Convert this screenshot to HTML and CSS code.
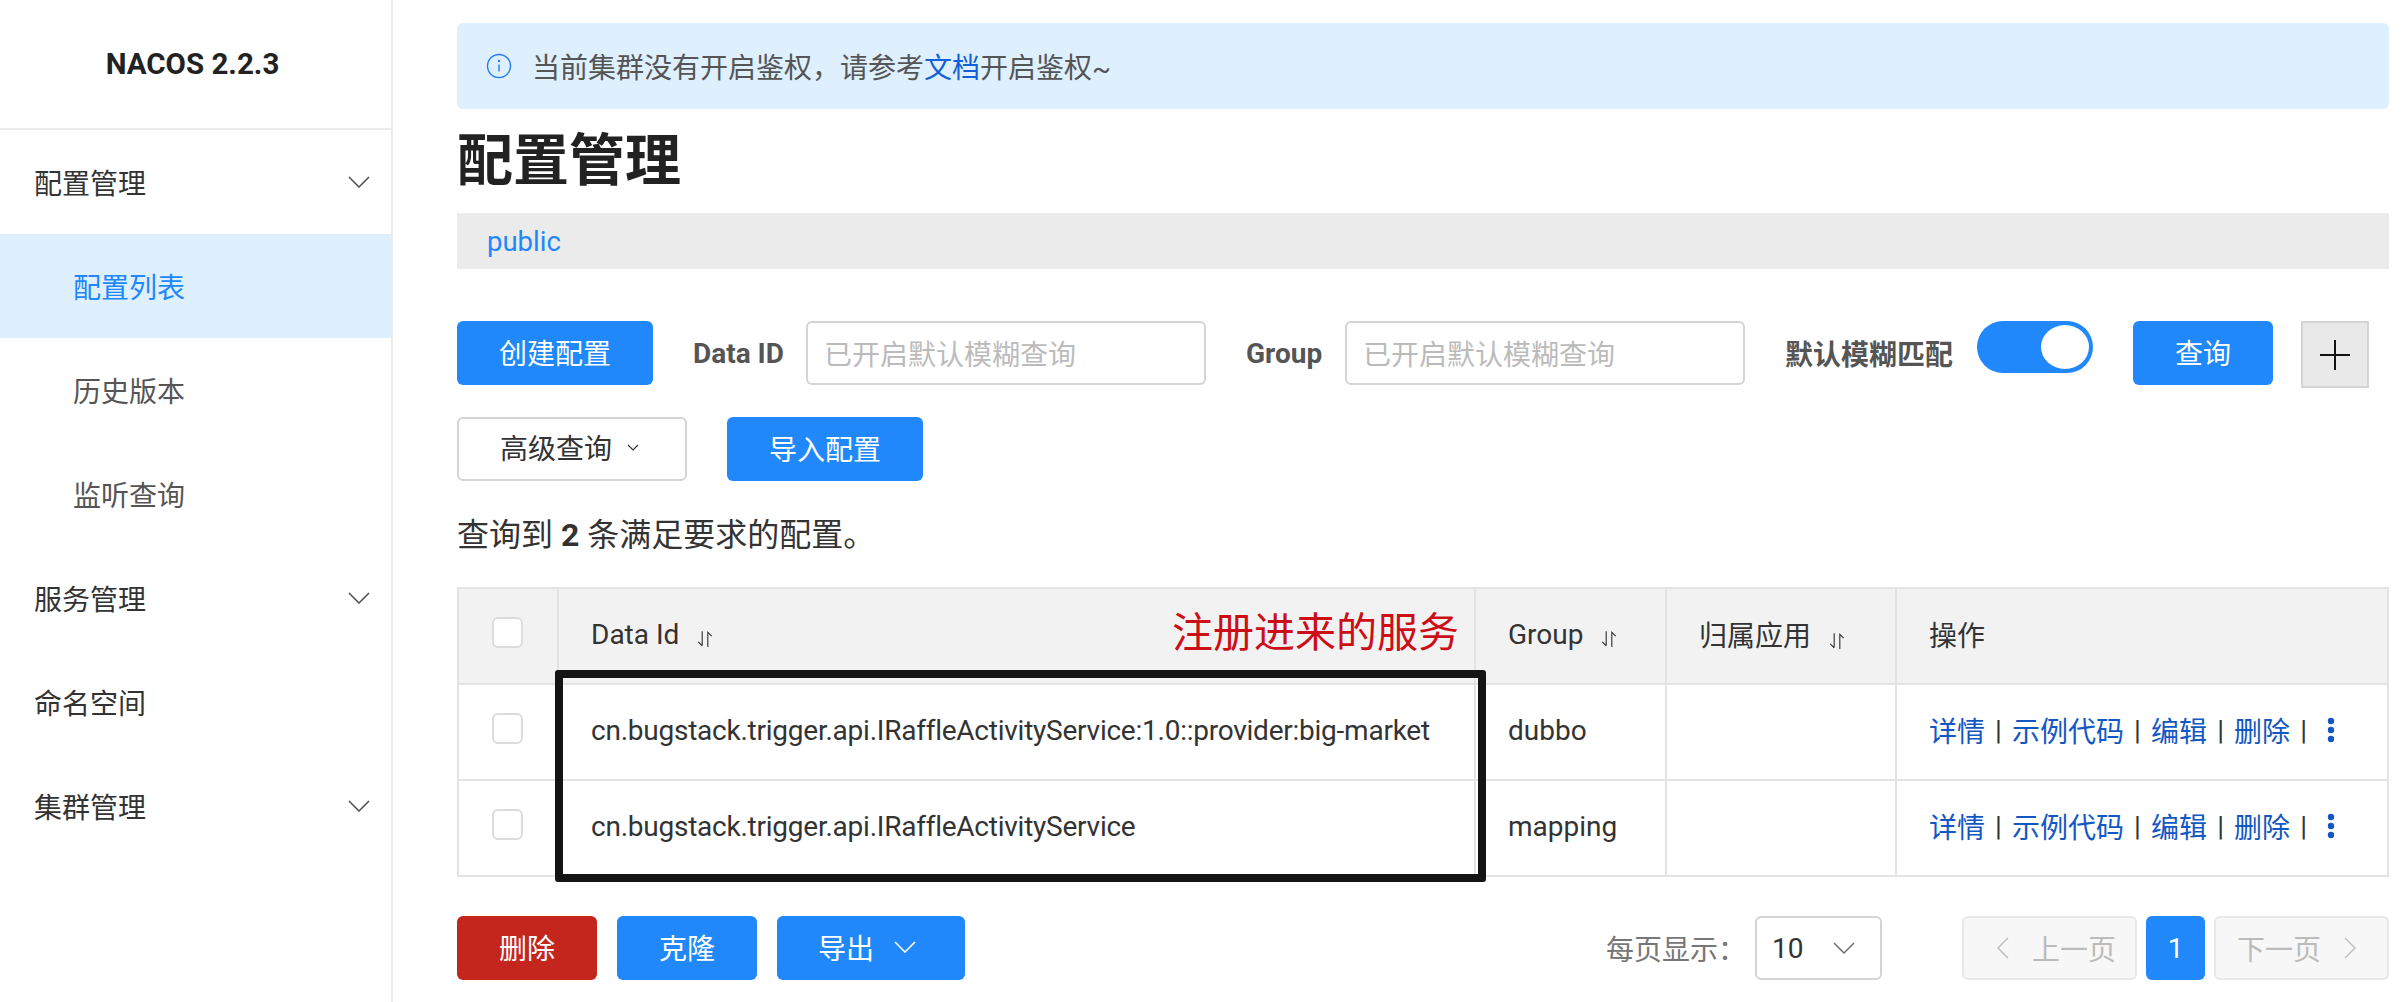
FILE: index.html
```html
<!DOCTYPE html>
<html lang="zh-CN">
<head>
    <meta charset="UTF-8">
    <title>NACOS 2.2.3</title>
    <link rel="stylesheet" href="styles.css">
</head>
<body>

<!-- Menu -->
<div class="sidebar">
    <div class="logo">NACOS 2.2.3</div>
    <div class="menu-item">配置管理
        <svg class="chevron" viewBox="0 0 22 12"><path d="M1 1l10 10L21 1"/></svg>
    </div>
    <div class="menu-item sub active">配置列表</div>
    <div class="menu-item sub">历史版本</div>
    <div class="menu-item sub">监听查询</div>
    <div class="menu-item">服务管理
        <svg class="chevron" viewBox="0 0 22 12"><path d="M1 1l10 10L21 1"/></svg>
    </div>
    <div class="menu-item">命名空间</div>
    <div class="menu-item">集群管理
        <svg class="chevron" viewBox="0 0 22 12"><path d="M1 1l10 10L21 1"/></svg>
    </div>
</div>

<div class="main">
    <div class="alert">
        <svg class="info-icon" viewBox="0 0 26 26">
            <circle cx="13" cy="13" r="11.5"/>
            <path d="M13 11.5v7"/>
            <circle class="dot" cx="13" cy="8" r="1.2"/>
        </svg>
        <span>当前集群没有开启鉴权，请参考<a class="doc-link">文档</a>开启鉴权~</span>
    </div>

    <h1 class="title">配置管理</h1>
    <div class="namespace"><span>public</span></div>

    <div class="form-row first">
        <button class="btn primary create">创建配置</button>
        <label class="data-id-label">Data ID</label>
        <div class="input">已开启默认模糊查询</div>
        <label class="group-label">Group</label>
        <div class="input">已开启默认模糊查询</div>
        <label class="fuzzy-label">默认模糊匹配</label>
        <div class="toggle"><div class="knob"></div></div>
        <button class="btn primary query">查询</button>
        <div class="plus-box">
            <svg viewBox="0 0 30 30"><path d="M15 0v30M0 15h30"/></svg>
        </div>
    </div>

    <div class="form-row second">
        <button class="btn outline">高级查询
            <svg class="mini-chevron" viewBox="0 0 12 7"><path d="M1 1l5 5 5-5"/></svg>
        </button>
        <button class="btn primary import">导入配置</button>
    </div>

    <div class="count">查询到 <b>2</b> 条满足要求的配置。</div>

    <div class="table-wrap">
        <table>
            <colgroup>
                <col class="col-check">
                <col class="col-id">
                <col class="col-group">
                <col class="col-app">
                <col class="col-ops">
            </colgroup>
            <thead>
                <tr>
                    <th class="check-cell"><div class="checkbox"></div></th>
                    <th>Data Id <svg class="sort" viewBox="0 0 14 16"><path d="M4.5 1v13M1 10.5L4.5 14M9.5 15V2L13 5.5"/></svg></th>
                    <th>Group <svg class="sort" viewBox="0 0 14 16"><path d="M4.5 1v13M1 10.5L4.5 14M9.5 15V2L13 5.5"/></svg></th>
                    <th>归属应用 <svg class="sort" viewBox="0 0 14 16"><path d="M4.5 1v13M1 10.5L4.5 14M9.5 15V2L13 5.5"/></svg></th>
                    <th>操作</th>
                </tr>
            </thead>
            <tbody>
                <tr>
                    <td class="check-cell"><div class="checkbox"></div></td>
                    <td class="data-id">cn.bugstack.trigger.api.IRaffleActivityService:1.0::provider:big-market</td>
                    <td>dubbo</td>
                    <td></td>
                    <td>
                        <div class="ops">
                            <a>详情</a><span class="sep">|</span><a>示例代码</a><span class="sep">|</span><a>编辑</a><span class="sep">|</span><a>删除</a><span class="sep">|</span>
                            <svg class="kebab" viewBox="0 0 8 26"><circle cx="4" cy="4" r="3.2"/><circle cx="4" cy="13" r="3.2"/><circle cx="4" cy="22" r="3.2"/></svg>
                        </div>
                    </td>
                </tr>
                <tr>
                    <td class="check-cell"><div class="checkbox"></div></td>
                    <td class="data-id">cn.bugstack.trigger.api.IRaffleActivityService</td>
                    <td>mapping</td>
                    <td></td>
                    <td>
                        <div class="ops">
                            <a>详情</a><span class="sep">|</span><a>示例代码</a><span class="sep">|</span><a>编辑</a><span class="sep">|</span><a>删除</a><span class="sep">|</span>
                            <svg class="kebab" viewBox="0 0 8 26"><circle cx="4" cy="4" r="3.2"/><circle cx="4" cy="13" r="3.2"/><circle cx="4" cy="22" r="3.2"/></svg>
                        </div>
                    </td>
                </tr>
            </tbody>
        </table>
        <!-- Annotation drawn over the table -->
        <div class="note">注册进来的服务</div>
        <div class="note-box"></div>
    </div>

    <div class="footer-row">
        <button class="btn danger small">删除</button>
        <button class="btn primary small">克隆</button>
        <button class="btn primary export">导出
            <svg class="export-chevron" viewBox="0 0 22 12"><path d="M1 1l10 10L21 1"/></svg>
        </button>

        <div class="page-size-label">每页显示：</div>
        <div class="page-size">10
            <svg class="size-chevron" viewBox="0 0 22 12"><path d="M1 1l10 10L21 1"/></svg>
        </div>
        <div class="page-btn prev">
            <svg class="page-arrow" viewBox="0 0 12 22"><path d="M11 1L1 11l10 10"/></svg>上一页
        </div>
        <div class="page-num">1</div>
        <div class="page-btn next">下一页
            <svg class="page-arrow" viewBox="0 0 12 22"><path d="M1 1l10 10L1 21"/></svg>
        </div>
    </div>
</div>

</body>
</html>
```

FILE: styles.css
```css
html, body {
    height: 100%;
}
body {
    font-family: Roboto, "Noto Sans CJK SC", sans-serif;
    font-size: 28px;
    color: #333;
    margin: 0;
    background-color: #fff;
    display: flex;
    overflow: hidden;
}
svg {
    fill: none;
    stroke: currentColor;
}

/* Menu */
.sidebar {
    width: 391px;
    flex-shrink: 0;
    border-right: 2px solid #ebebeb;
}
.logo {
    height: 130px;
    box-sizing: border-box;
    border-bottom: 2px solid #ebebeb;
    padding-right: 6px;
    display: flex;
    align-items: center;
    justify-content: center;
    font-size: 29.5px;
    font-weight: 700;
    color: #222;
}
.menu-item {
    height: 104px;
    padding-left: 34px;
    display: flex;
    align-items: center;
    color: #333;
}
.menu-item.sub {
    padding-left: 73px;
    color: #555;
}
.menu-item.active {
    background-color: #deeffe;
    color: #2088fa;
}
.chevron {
    width: 22px;
    height: 12px;
    margin-left: auto;
    margin-right: 21px;
    stroke-width: 1.6;
    color: #555;
}

/* Content */
.main {
    flex: 1;
    padding: 23px 15px 0 64px;
    min-width: 0;
}
.alert {
    height: 86px;
    background-color: #deeffe;
    border-radius: 6px;
    display: flex;
    align-items: center;
    padding-left: 29px;
    color: #555;
}
.info-icon {
    width: 26px;
    height: 26px;
    margin-right: 20px;
    color: #2a7cf0;
    stroke-width: 1.4;
}
.info-icon .dot {
    fill: #2a7cf0;
    stroke: none;
}
.doc-link {
    color: #1161d8;
}
.title {
    font-size: 56px;
    line-height: 80px;
    font-weight: 700;
    color: #222;
    margin: 12px 0 0;
    height: 92px;
}
.namespace {
    height: 56px;
    background-color: #ebebeb;
    display: flex;
    align-items: center;
    padding-left: 30px;
    color: #2088fa;
    font-size: 27.5px;
}

.form-row {
    display: flex;
    align-items: flex-start;
}
.form-row.first {
    margin-top: 52px;
    height: 67px;
}
.form-row.second {
    margin-top: 29px;
}
.btn {
    height: 64px;
    width: 196px;
    border: none;
    border-radius: 6px;
    font-family: inherit;
    font-size: 28px;
    padding: 0 0 3px;
    display: flex;
    align-items: center;
    justify-content: center;
}
.btn.primary {
    background-color: #2088fa;
    color: #fff;
}
.btn.danger {
    background-color: #c4261d;
    color: #fff;
}
.btn.outline {
    width: 230px;
    background-color: #fff;
    border: 2px solid #d4d4d4;
    color: #333;
    padding: 0 5px 4px 0;
}
.btn.import {
    margin-left: 40px;
}
.btn.query {
    width: 140px;
    margin-left: 40px;
}
.mini-chevron {
    width: 12px;
    height: 7px;
    margin-left: 15px;
    stroke-width: 1.2;
}
.form-row label {
    height: 64px;
    display: flex;
    align-items: center;
    font-weight: 700;
    color: #555;
}
.data-id-label {
    margin-left: 40px;
    width: 113px;
}
.group-label {
    margin-left: 40px;
    width: 99px;
}
.fuzzy-label {
    margin-left: 40px;
    width: 192px;
}
.input {
    width: 400px;
    height: 64px;
    box-sizing: border-box;
    border: 2px solid #d4d4d4;
    border-radius: 6px;
    padding-left: 16px;
    display: flex;
    align-items: center;
    color: #bbb;
}
.toggle {
    width: 116px;
    height: 52px;
    background-color: #2088fa;
    border-radius: 26px;
    display: flex;
    align-items: center;
    justify-content: flex-end;
    padding-right: 4px;
    box-sizing: border-box;
}
.knob {
    width: 48px;
    height: 44px;
    background-color: #fff;
    border-radius: 50%;
}
.plus-box {
    width: 68px;
    height: 67px;
    box-sizing: border-box;
    margin-left: 28px;
    background-color: #e9e9e9;
    border: 2px solid #d4d4d4;
    display: flex;
    align-items: center;
    justify-content: center;
    color: #111;
}
.plus-box svg {
    width: 30px;
    height: 30px;
    stroke-width: 2;
}

.count {
    margin-top: 33px;
    height: 42px;
    line-height: 42px;
    font-size: 32px;
    color: #333;
}
.count b {
    font-weight: 700;
}

/* Table */
.table-wrap {
    position: relative;
    margin-top: 31px;
}
table {
    width: 100%;
    table-layout: fixed;
    border-collapse: collapse;
    border: 2px solid #e3e3e3;
}
.col-check { width: 100px; }
.col-id { width: 917px; }
.col-group { width: 191px; }
.col-app { width: 230px; }
th, td {
    border: 2px solid #e3e3e3;
    padding: 0 0 4px 32px;
    text-align: left;
    font-weight: 400;
    color: #333;
}
th {
    height: 90px;
    background-color: #f2f2f2;
}
td {
    height: 90px;
}
th.check-cell, td.check-cell {
    padding: 0;
}
td.data-id {
    letter-spacing: -0.24px;
}
.checkbox {
    width: 31px;
    height: 31px;
    box-sizing: border-box;
    background-color: #fff;
    border: 2px solid #dcdcdc;
    border-radius: 6px;
    margin: -8px auto 0 33px;
}
.sort {
    width: 16px;
    height: 18px;
    margin-left: 11px;
    stroke-width: 1;
    vertical-align: -4px;
}
.ops {
    display: flex;
    align-items: center;
}
.ops a {
    color: #1257c4;
}
.sep {
    width: 27px;
    text-align: center;
    color: #333;
}
.kebab {
    width: 8px;
    height: 26px;
    margin-left: 10px;
}
.kebab circle {
    fill: #1257c4;
    stroke: none;
}
.note {
    position: absolute;
    right: 930px;
    top: 18px;
    font-size: 41px;
    line-height: 56px;
    color: #cc0f17;
}
.note-box {
    position: absolute;
    left: 98px;
    top: 83px;
    width: 931px;
    height: 212px;
    box-sizing: border-box;
    border: 8px solid #141414;
    border-radius: 3px;
}

/* Bottom row */
.footer-row {
    display: flex;
    align-items: center;
    margin-top: 39px;
}
.btn.small {
    width: 140px;
    margin-right: 20px;
}
.btn.export {
    width: 188px;
    padding-right: 8px;
}
.export-chevron {
    width: 22px;
    height: 12px;
    margin-left: 20px;
    stroke-width: 1.6;
}
.page-size-label {
    margin-left: auto;
    color: #777;
    width: 149px;
}
.page-size {
    width: 127px;
    height: 64px;
    box-sizing: border-box;
    border: 2px solid #d4d4d4;
    border-radius: 6px;
    display: flex;
    align-items: center;
    justify-content: space-between;
    padding: 0 25px 0 15px;
}
.size-chevron {
    width: 22px;
    height: 12px;
    stroke-width: 1.4;
    color: #666;
}
.page-btn {
    width: 175px;
    height: 64px;
    box-sizing: border-box;
    background-color: #f7f7f7;
    border: 2px solid #e8e8e8;
    border-radius: 6px;
    color: #bbb;
    display: flex;
    align-items: center;
    gap: 23px;
}
.page-btn.prev {
    margin-left: 80px;
    padding-left: 33px;
}
.page-btn.next {
    padding-left: 21px;
}
.page-arrow {
    width: 12px;
    height: 22px;
    stroke-width: 1.4;
}
.page-num {
    width: 59px;
    height: 64px;
    margin: 0 9px;
    background-color: #2088fa;
    border-radius: 6px;
    color: #fff;
    display: flex;
    align-items: center;
    justify-content: center;
}
```
